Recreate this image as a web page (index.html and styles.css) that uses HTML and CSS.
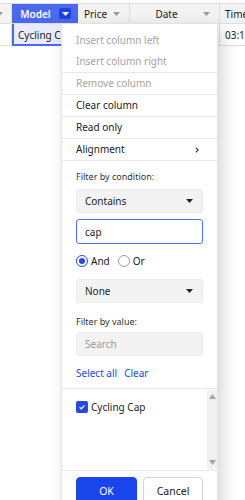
FILE: index.html
```html
<!DOCTYPE html>
<html>
<head>
<meta charset="utf-8">
<link rel="stylesheet" href="styles.css">
</head>
<body>
<div class="sheet">
  <div class="grid">
    <div class="cell head c0"><svg class="caret edge" width="7" height="4" viewBox="0 0 7 4"><polygon points="0,0 7,0 3.5,4" /></svg></div>
    <div class="cell head sel-head"><span class="htext">Model</span><span class="dd-btn"><svg width="7" height="4" viewBox="0 0 7 4"><polygon points="0,0 7,0 3.5,4" /></svg></span></div>
    <div class="cell head"><span class="htext">Price</span><svg class="caret" width="7" height="4" viewBox="0 0 7 4"><polygon points="0,0 7,0 3.5,4" /></svg></div>
    <div class="cell head"><span class="htext">Date</span><svg class="caret" width="7" height="4" viewBox="0 0 7 4"><polygon points="0,0 7,0 3.5,4" /></svg></div>
    <div class="cell head"><span class="htext left">Time</span></div>

    <div class="cell c0"></div>
    <div class="cell sel-cell">Cycling Cap</div>
    <div class="cell"></div>
    <div class="cell"></div>
    <div class="cell">03:15</div>
  </div>
</div>

<div class="menu">
  <div class="group">
    <div class="item disabled">Insert column left</div>
    <div class="item disabled">Insert column right</div>
  </div>
  <div class="group">
    <div class="item disabled">Remove column</div>
  </div>
  <div class="group">
    <div class="item">Clear column</div>
  </div>
  <div class="group">
    <div class="item">Read only</div>
  </div>
  <div class="group">
    <div class="item sub">Alignment<svg width="4" height="6" viewBox="0 0 4 6"><polyline points="0.8,0.6 3.2,3 0.8,5.4" /></svg></div>
  </div>
  <div class="group filters">
    <div class="label">Filter by condition:</div>
    <div class="select first">Contains<svg width="7" height="4" viewBox="0 0 7 4"><polygon points="0,0 7,0 3.5,4" /></svg></div>
    <div class="input focus">cap</div>
    <div class="radios">
      <span class="radio on"></span><span class="rlabel">And</span>
      <span class="radio"></span><span class="rlabel">Or</span>
    </div>
    <div class="select none">None<svg width="7" height="4" viewBox="0 0 7 4"><polygon points="0,0 7,0 3.5,4" /></svg></div>
    <div class="label value">Filter by value:</div>
    <div class="select search">Search</div>
    <div class="links"><span>Select all</span><span>Clear</span></div>
  </div>
  <div class="group list">
    <div class="check-row">
      <span class="checkbox"><svg width="8" height="8" viewBox="0 0 8 8"><polyline points="1.6,4.2 3.3,5.8 6.4,2.4" /></svg></span>
      <span>Cycling Cap</span>
    </div>
    <div class="scrollbar">
      <svg width="7" height="5" viewBox="0 0 7 5"><polygon points="0,5 7,5 3.5,0" /></svg>
      <svg width="7" height="5" viewBox="0 0 7 5"><polygon points="0,0 7,0 3.5,5" /></svg>
    </div>
  </div>
  <div class="group buttons">
    <button class="btn ok">OK</button>
    <button class="btn cancel">Cancel</button>
  </div>
</div>
</body>
</html>
```
FILE: styles.css
```css
* { box-sizing: border-box; }
html, body {
  margin: 0;
  padding: 0;
  background: #ffffff;
  width: 245px;
  height: 500px;
  overflow: hidden;
  font-family: "Noto Sans", "Liberation Sans", sans-serif;
  color: #222;
}
.sheet {
  padding-top: 3px;
  width: 245px;
  overflow: hidden;
}
.grid {
  display: grid;
  grid-template-columns: 12px 66px 52px 90px 60px;
  grid-template-rows: 20px 22px;
  border-top: 1px solid #dedede;
  width: 280px;
}
.cell {
  border-right: 1px solid #dedede;
  border-bottom: 1px solid #dedede;
  font-size: 10px;
  line-height: 20px;
  padding-left: 5px;
  white-space: nowrap;
  overflow: hidden;
  display: flex;
  align-items: center;
}
.cell.head {
  background: #f3f3f3;
  padding: 0 6px 0 0;
  color: #222;
}
.cell.c0 { padding: 0; }
.caret { fill: #9a9a9a; flex: none; }
.caret.edge { margin-left: -4px; }
.htext {
  flex: 1;
  text-align: center;
}
.htext.left { text-align: left; padding-left: 5px; }
.head .caret { margin-right: 3px; }
.sel-head {
  background: #4a69ee !important;
  color: #fff !important;
  font-weight: 600;
  border-right-color: #4a69ee;
}
.dd-btn {
  width: 12px;
  height: 11px;
  background: #1d43de;
  border-radius: 2px;
  display: flex;
  align-items: center;
  justify-content: center;
  flex: none;
}
.dd-btn svg { fill: #fff; }
.sel-cell {
  background: #e8ecfd;
  box-shadow: inset 2px 0 0 #4a69ee, inset 0 -1px 0 #4a69ee;
  border-bottom-color: #4a69ee;
  padding-left: 6px;
}

/* menu */
.menu {
  position: absolute;
  left: 61px;
  top: 23px;
  width: 157px;
  height: 520px;
  background: #fff;
  border: 1px solid #e2e2e2;
  box-shadow: 5px 6px 16px rgba(0, 0, 0, 0.16);
  padding-top: 6px;
  font-size: 10px;
}
.group + .group { border-top: 1px solid #e6e6e6; }
.item {
  height: 21px;
  line-height: 21px;
  padding: 0 14px;
  color: #222;
  display: flex;
  align-items: center;
  justify-content: space-between;
}
.item.disabled { color: #a4a4a4; }
.item.sub svg {
  fill: none;
  stroke: #333;
  stroke-width: 1.1;
  margin-right: 4px;
}
.filters {
  padding: 10px 14px 9px;
  display: flex;
  flex-direction: column;
}
.label {
  font-size: 9px;
  line-height: 12px;
  color: #333;
}
.label.value { margin-top: 13px; }
.select, .input {
  height: 24px;
  border-radius: 3px;
  background: #f3f3f4;
  border: 1px solid #ebebeb;
  padding: 0 9px 0 8px;
  display: flex;
  align-items: center;
  justify-content: space-between;
  font-size: 10px;
  color: #222;
}
.select svg { fill: #222; }
.select.first { margin-top: 6px; }
.input {
  margin-top: 6px;
  height: 25px;
  background: #fff;
  border: 1px solid #4f6ff0;
}
.select.none { margin-top: 11px; }
.select.search { margin-top: 4px; color: #9a9a9a; }
.radios {
  margin-top: 10px;
  height: 14px;
  display: flex;
  align-items: center;
}
.radio {
  width: 12px;
  height: 12px;
  border-radius: 50%;
  border: 1px solid #9b9b9b;
  display: inline-flex;
  align-items: center;
  justify-content: center;
  flex: none;
}
.radio.on { border-color: #2449e3; }
.radio.on::after {
  content: "";
  width: 6px;
  height: 6px;
  border-radius: 50%;
  background: #2449e3;
}
.rlabel { margin: 0 8px 0 3px; font-size: 10px; }
.links {
  margin-top: 11px;
  line-height: 12px;
  color: #2449e3;
  display: flex;
  gap: 7px;
}
.list {
  height: 82px;
  position: relative;
  padding: 11px 14px 0;
}
.check-row {
  display: flex;
  align-items: center;
  gap: 3px;
  font-size: 10px;
}
.checkbox {
  width: 12px;
  height: 12px;
  border-radius: 2px;
  background: #2449e3;
  display: inline-flex;
  align-items: center;
  justify-content: center;
}
.checkbox svg { fill: none; stroke: #fff; stroke-width: 1.2; }
.scrollbar {
  position: absolute;
  right: 0;
  top: 1px;
  bottom: 1px;
  width: 10px;
  background: #f1f1f1;
  display: flex;
  flex-direction: column;
  justify-content: space-between;
  align-items: center;
  padding: 4px 0;
}
.scrollbar svg { fill: #a6a6a6; }
.buttons {
  padding: 6px 14px 0;
  display: flex;
  gap: 6px;
}
.btn {
  height: 28px;
  border-radius: 4px;
  font-family: inherit;
  font-size: 10.5px;
  padding: 0;
}
.btn.ok {
  width: 61px;
  background: #1b45ec;
  color: #fff;
  border: 1px solid #1b45ec;
}
.btn.cancel {
  width: 60px;
  background: #fff;
  color: #222;
  border: 1px solid #d3d3d3;
}
```
